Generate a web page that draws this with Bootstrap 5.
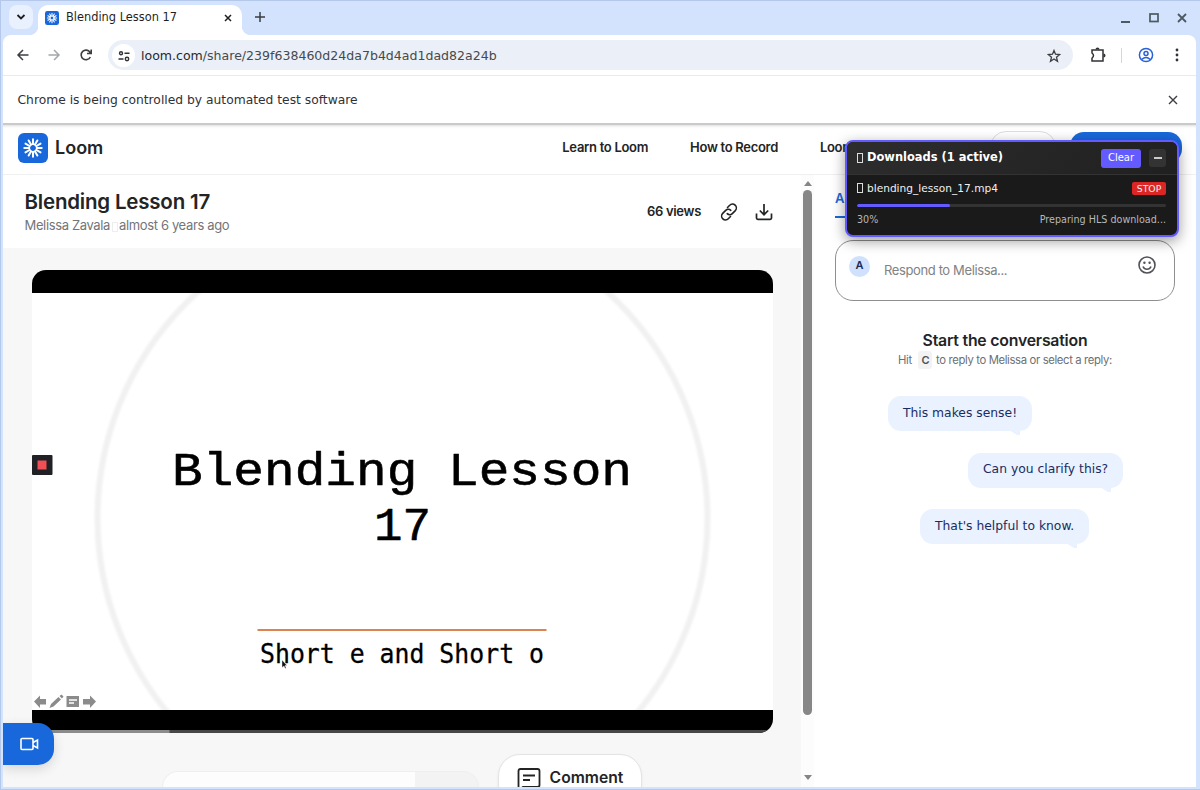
<!DOCTYPE html>
<html lang="en">
<head>
<meta charset="utf-8">
<title>Blending Lesson 17</title>
<link rel="stylesheet" href="https://cdn.jsdelivr.net/npm/bootstrap@5.3.0/dist/css/bootstrap.min.css">
<style>
html,body{height:100%;overflow:hidden}
body{font-family:Inter,sans-serif;color:#232425;font-size:14px;line-height:1.2}
svg{display:block;flex:none}
.ui{font-family:"DejaVu Sans",sans-serif}
.window{width:1200px;height:790px;background:#d3e3fd;padding:0 4px 3px 2px;border:solid #b3c8ea;border-width:1px 0 1px 1px}
.tabstrip{height:34px;padding-left:6px}
.tabsearch{width:24px;height:24px;border-radius:8px;background:#e9f0fe;margin-top:4px}
.tab{width:204px;height:30px;background:#fff;border-radius:10px 10px 0 0;margin:4px 0 0 5px;padding:0 6px 5px 7px;position:relative;font-size:11.4px;color:#1f1f1f}
.tab::before,.tab::after{content:"";position:absolute;bottom:0;width:9px;height:9px}
.tab::before{left:-9px;background:radial-gradient(circle at 0 0,transparent 9px,#fff 9.5px)}
.tab::after{right:-9px;background:radial-gradient(circle at 100% 0,transparent 9px,#fff 9.5px)}
.toolbar{height:41px;background:#fff;border-radius:8px 8px 0 0;padding-left:13px;padding-right:13px;border-bottom:1px solid #e9eaec}
.omni{width:965px;height:30px;border-radius:15px;background:#ebf0f8;font-size:12.55px;color:#46494d;margin-left:15px;padding:1px 12px 0 4px}
.omni b{font-weight:400;color:#26282b}
.siteinfo{width:23px;height:23px;border-radius:50%;background:#fff}
.infobar{height:47px;background:#fff;font-size:12.3px;color:#303134;padding:0 17px 0 14.500px}
.page{height:664px;background:#fff;overflow:hidden;position:relative;border-top:2px solid #c9cacc;box-shadow:inset 0 3px 3px -2px #ddd}
.sitehead{height:50px;border-bottom:1px solid #f0f0f0;padding:0 14px 4px 14.500px;font-weight:600}
.logo{font-size:18px;letter-spacing:0}
.navlinks{gap:42px;margin-left:459px;white-space:nowrap;font-size:13px;letter-spacing:-.3px;padding-top:1px}
.leftpane{width:798px}
.titlebar{height:73px;padding:0 26px 0 21.500px}
.titlebar h1{font-size:20.5px;font-weight:600;letter-spacing:-.2px;margin:12px 0 0;line-height:30px}
.byline{font-size:13px;letter-spacing:-.36px;color:#737578;line-height:17px}
.views{font-size:13px;letter-spacing:-.3px;font-weight:600}
.stage{background:#f7f7f7;height:542px;padding:22px 28px 0 28.500px}
.video{width:741px;height:463px;border-radius:14px;overflow:hidden;background:#000}
.composer{width:317px;height:40px;border-radius:16px 16px 0 0;background:linear-gradient(90deg,#fdfdfd 0 252px,#f3f3f3 252px);border:1px solid #efefef;border-bottom:0;margin:17px 0 0 130px}
.commentbtn{width:144px;height:60px;border:1px solid #e4e4e4;border-radius:22px;background:#fff;margin-left:19px;font-size:15.7px;font-weight:600;padding:0 0 11px 1px;box-shadow:0 1px 3px #0001}
.scroller{width:13px;background:#fcfcfc;padding:6px 0 5px}
.thumb{width:9px;height:525px;border-radius:5px;background:#878787;margin-top:4px}
.rightpane{width:382px;padding:0 21px 0 21px}
.tabs-row{height:43px;color:#1868db;font-weight:600;font-size:13px;padding-top:16px}
.tabs-row span{border-bottom:2px solid #1868db;width:60px}
.reply{height:61px;border:1px solid #8d8f91;border-radius:18px;margin-top:22px;padding:0 17px 0 13px;color:#808284;font-size:13px;letter-spacing:-.38px}
.avatar{width:21px;height:21px;border-radius:50%;background:#cfe1fd;color:#1c2b52;font-size:11px;font-weight:600;margin-bottom:9px;letter-spacing:0}
.convo{font-size:15.8px;font-weight:600;letter-spacing:-.2px;margin-top:30px;line-height:20px}
.hint{font-size:11.3px;letter-spacing:-.36px;color:#6c6f73;line-height:18px}
.hint kbd{font:600 11px Inter,sans-serif;color:#505258;background:#f3f3f4;border-radius:3px;padding:2px 3px;margin:0 1px}
.bubble{height:35px;border-radius:13px;background:#e9f2fe;color:#1c2b61;font-size:12.33px;padding:0 15px 1px;position:relative;width:max-content;margin-bottom:21.5px}
.bubble::after{content:"";position:absolute;right:12px;bottom:-4px;border:solid transparent;border-width:0 3px 6px 8px;border-right-color:#e9f2fe;border-top:5px solid #e9f2fe;border-bottom:0}
.ghostbtn{position:absolute;left:987px;top:6px;width:66px;height:32px;border:1px solid #ddd;border-radius:16px}
.bluebtn{position:absolute;left:1067px;top:7px;width:112px;height:31px;border-radius:14px;background:#1868db}
.dl{position:absolute;left:842px;top:15px;width:334px;height:97px;background:#1a1a1a;border:2px solid #635bff;border-radius:8px;color:#fff;box-shadow:0 4px 14px #0006;overflow:hidden}
.dlhead{height:33px;background:linear-gradient(135deg,#2d2d2d,#202020);border-bottom:1px solid #333;padding:0 11px 0 10px;font-size:11.45px;font-weight:700}
.clearbtn{width:40px;height:19px;border-radius:3px;background:#635bff;font-size:10px;font-weight:400}
.minbtn{width:17px;height:18px;border-radius:3px;background:#333}
.stopbtn{background:#dc2626;border-radius:2px;width:34px;height:13px;font-size:9.3px}
.tofu{display:inline-block;width:6px;height:10px;border:1px solid #ddd;margin-right:4px;vertical-align:-1px}
.dlrow{font-size:10.6px;color:#f0f0f0;padding:7px 11px 0 10px;height:21px}
.dlbar{height:3px;background:#333;margin:8px 11px 0 10px;border-radius:2px}
.dlbar .progress-bar{background:#635bff;border-radius:2px}
.dlfoot{font-size:9.6px;color:#b8b8b8;padding:7px 11px 0 10px}
.recbtn{position:absolute;left:0;top:598px;width:51px;height:42px;background:#1868db;border-radius:0 16px 16px 0;box-shadow:0 4px 12px #0002;padding-left:17px}
</style>
<script src="https://cdn.jsdelivr.net/npm/bootstrap@5.3.0/dist/js/bootstrap.bundle.min.js"></script>
</head>
<body>
<svg width="0" height="0" class="position-absolute"><defs>
<g id="burst" stroke="#fff" stroke-width="2" stroke-linecap="round"><g id="rays"><path d="M0-4V-8.7M0 4V8.7M-4 0H-8.7M4 0H8.7"/></g><use href="#rays" transform="rotate(30)"/><use href="#rays" transform="rotate(60)"/><circle r="3.7" fill="none" stroke-width="1.6"/></g>
</defs></svg>
<div class="window d-flex flex-column">
  <div class="tabstrip d-flex ui flex-shrink-0">
    <div class="tabsearch d-flex align-items-center justify-content-center"><svg width="10" height="8" fill="none" stroke="#1f1f1f" stroke-width="1.8"><path d="M1.500 2 5 5.500 8.500 2"/></svg></div>
    <div class="tab d-flex align-items-center">
      <svg width="14" height="14" viewBox="-15 -15 30 30"><rect x="-15" y="-15" width="30" height="30" rx="5" fill="#1868db"/><use href="#burst" transform="scale(1.15)"/></svg>
      <span class="flex-grow-1" style="margin-left:7px">Blending Lesson 17</span>
      <svg width="8" height="8" stroke="#1f1f1f" stroke-width="1.500" class="me-1"><path d="M1 1 7 7M7 1 1 7"/></svg>
    </div>
    <svg width="12" height="12" stroke="#3b3e42" stroke-width="1.500" style="margin:10px 0 0 12px"><path d="M6 1V11M1 6H11"/></svg>
    <div class="ms-auto d-flex align-items-center" style="gap:18px;padding-right:9px">
      <svg width="10" height="10"><path d="M0 9H9" stroke="#4b5a60" stroke-width="2"/></svg>
      <svg width="10" height="10"><rect x="1" y="1" width="8" height="7.500" fill="none" stroke="#4b5a60" stroke-width="1.700"/></svg>
      <svg width="10" height="10" stroke="#4b5a60" stroke-width="1.800"><path d="M1 1 9 9M9 1 1 9"/></svg>
    </div>
  </div>
  <div class="toolbar d-flex align-items-center ui flex-shrink-0">
    <svg width="14" height="14" fill="none" stroke="#3c3e42" stroke-width="1.500"><path d="M12.500 7H2.500M7 2 2 7 7 12"/></svg>
    <svg width="14" height="14" fill="none" stroke="#a5a7aa" stroke-width="1.500" style="margin-left:17px"><path d="M1.500 7H11.500M7 2 12 7 7 12"/></svg>
    <svg width="14" height="14" fill="none" stroke="#3c3e42" stroke-width="1.600" style="margin-left:18px"><path d="M11.300 9A4.800 4.800 0 1 1 11 4.300L12 5.300M12.200 1.500V5.500H8"/></svg>
    <div class="omni d-flex align-items-center">
      <div class="siteinfo d-flex align-items-center justify-content-center" style="margin-right:6px"><svg width="12" height="12" fill="none" stroke="#303236" stroke-width="1.400"><circle cx="3" cy="3.200" r="1.500"/><path d="M6.500 3.200H11.500M.5 9H5.500"/><circle cx="9" cy="9" r="1.700"/></svg></div>
      <span class="flex-grow-1"><b>loom.com</b>/share/239f638460d24da7b4d4ad1dad82a24b</span>
      <svg width="14" height="14" viewBox="0 0 14 14" fill="none" stroke="#3c3e42" stroke-width="1.300"><path d="M7 1.500 8.500 5.200 12.700 5.500 9.500 8.200 10.500 12.300 7 10 3.500 12.300 4.500 8.200 1.300 5.500 5.500 5.200Z"/></svg>
    </div>
    <svg width="16" height="16" fill="none" stroke="#303236" stroke-width="1.500" style="margin-left:17px"><path d="M2 3H13V14H2V11.200Q5 8.500 2 6Z"/><path fill="#303236" stroke="none" d="M5.500 2.500a2 2 0 0 1 4 0ZM13.500 6.500a2 2 0 0 1 0 4Z"/></svg>
    <div style="width:1px;height:15px;background:#c5d8f7;margin:0 16px 0 15px"></div>
    <svg width="16" height="16" fill="none" stroke="#2862d9" stroke-width="1.500"><circle cx="8" cy="8" r="6.600"/><circle cx="8" cy="6.400" r="2"/><path d="M3.700 12.500Q8 8.500 12.300 12.500"/></svg>
    <svg width="4" height="14" fill="#303236" class="ms-auto me-1"><circle cx="2" cy="2" r="1.400"/><circle cx="2" cy="7" r="1.400"/><circle cx="2" cy="12" r="1.400"/></svg>
  </div>
  <div class="infobar d-flex align-items-center justify-content-between ui flex-shrink-0"><span style="padding-top:1px">Chrome is being controlled by automated test software</span>
    <svg width="12" height="12" stroke="#3c3e42" stroke-width="1.400"><path d="M2 2 10 10M10 2 2 10"/></svg></div>

  <div class="page flex-shrink-0">
    <div class="sitehead d-flex align-items-center">
      <svg width="30" height="30" viewBox="-15 -15 30 30"><rect x="-15" y="-15" width="30" height="30" rx="6" fill="#1868db"/><use href="#burst"/></svg>
      <span class="logo" style="margin-left:7.500px">Loom</span>
      <nav class="navlinks d-flex"><span>Learn to Loom</span><span>How to Record</span><span>Loom</span></nav>
    </div>
    <div class="d-flex">
      <div class="leftpane">
        <div class="titlebar d-flex align-items-center">
          <div class="align-self-start flex-grow-1"><h1>Blending Lesson 17</h1><div class="byline">Melissa Zavala<span class="tofu" style="border-color:#eee;margin:0 1px 0 2px;vertical-align:-2px"></span>almost 6 years ago</div></div>
          <span class="views">66 views</span>
          <svg width="18" height="18" viewBox="0 0 18 18" fill="none" stroke="#232425" stroke-width="1.600" stroke-linecap="round" style="margin-left:19px"><path d="M7.500 4.500 9.700 2.300A3.600 3.600 0 0 1 15.300 7.600L12.300 10.600A3.600 3.600 0 0 1 7.200 10.700M10.500 13.500 8.300 15.700A3.600 3.600 0 0 1 2.700 10.400L5.700 7.400A3.600 3.600 0 0 1 10.800 7.300"/></svg>
          <svg width="18" height="18" viewBox="0 0 18 18" fill="none" stroke="#232425" stroke-width="1.700" style="margin:0 2px 0 17px"><path d="M9 1V11.500M4.800 7.500 9 11.700 13.200 7.500M1.500 10.500V15Q1.500 16.300 2.800 16.300H15.200Q16.500 16.300 16.500 15V10.500"/></svg>
        </div>
        <div class="stage">
          <div class="video">
            <svg width="741" height="463" viewBox="32 270 741 463">
              <defs><clipPath id="slide"><rect x="32" y="293" width="741" height="417"/></clipPath><filter id="soft"><feGaussianBlur stdDeviation="1.200"/></filter></defs>
              <rect x="32" y="293" width="741" height="417" fill="#fff"/>
              <g clip-path="url(#slide)"><circle cx="402.500" cy="518" r="305" fill="none" stroke="#f1f1f1" stroke-width="6" filter="url(#soft)"/></g>
              <g fill="#000" font-family="Liberation Mono, monospace" font-size="47" stroke="#000" stroke-width=".6" stroke-linejoin="round">
                <text x="172" y="484.500" textLength="460" lengthAdjust="spacingAndGlyphs">Blending Lesson</text>
                <text x="374" y="539.500" textLength="57" lengthAdjust="spacingAndGlyphs">17</text></g>
              <path d="M257.500 630H546.500" stroke="#dc8352" stroke-width="2"/>
              <text x="260" y="662.500" fill="#000" stroke="#000" stroke-width=".3" font-family="DejaVu Sans Mono, monospace" font-size="26.500" textLength="284" lengthAdjust="spacingAndGlyphs">Short e and Short o</text>
              <path d="M282 660V667.500L284 666 285.200 668.500 286.200 668 285 665.500H287Z" fill="#111" stroke="#fff" stroke-width=".4"/>
              <rect x="32" y="455" width="20.500" height="20" rx="1" fill="#202124"/><rect x="37.500" y="460.500" width="9" height="9" fill="#f04f55"/>
              <g fill="#8b8b8b"><path d="M34 701.500 40 695.500V699H46V704.500H40V708ZM96 701.500 90 695.500V699H83V704.500H90V708Z"/><path d="M49.500 708 51 704 58.500 697 61 699.500 53.500 706.500ZM59.500 696 61.500 694.500 63.500 696.500 62 698.500Z"/><path d="M66.500 696H79V707H66.500Z"/><path d="M69 700H77M69 703H74" stroke="#fff" stroke-width="1.300"/></g>
              <path d="M32 731.500H773" stroke="#484848" stroke-width="3"/><path d="M32 731.500H169.500" stroke="#8b8b8b" stroke-width="3"/>
            </svg>
          </div>
          <div class="d-flex mt-1" style="padding-top:17px"><div class="composer"></div>
            <div class="commentbtn d-flex align-items-center justify-content-center"><svg width="24" height="24" fill="none" stroke="#232425" stroke-width="1.800" style="margin-right:9px"><path d="M1.500 21V4Q1.500 2 3.500 2H20.500Q22.500 2 22.500 4V18Q22.500 20 20.500 20H6L1.500 23ZM6 8.500H18M6 13H13"/></svg>Comment</div></div>
        </div>
      </div>
      <div class="scroller d-flex flex-column align-items-center">
        <svg width="8" height="5"><path d="M0 5 4 0 8 5Z" fill="#858585"/></svg>
        <div class="thumb"></div>
        <svg width="8" height="5" style="margin-top:60px"><path d="M0 0 4 5 8 0Z" fill="#858585"/></svg>
      </div>
      <div class="rightpane">
        <div class="tabs-row d-flex"><span>A</span></div>
        <div class="reply d-flex align-items-center"><div class="avatar d-flex align-items-center justify-content-center">A</div><span class="flex-grow-1" style="padding-left:14px">Respond to Melissa...</span>
          <svg width="20" height="20" fill="none" stroke="#505258" stroke-width="1.600" style="margin-bottom:12px"><circle cx="10" cy="10" r="8"/><path d="M6 11.500Q7.200 14.300 10 14.300T14 11.500"/><g fill="#505258" stroke="none"><circle cx="7.400" cy="7.800" r="1.200"/><circle cx="12.600" cy="7.800" r="1.200"/></g></svg></div>
        <div class="convo text-center">Start the conversation</div>
        <div class="hint text-center">Hit&nbsp; <kbd>C</kbd> to reply to Melissa or select a reply:</div>
        <div class="ui" style="padding-top:27px">
          <div class="bubble d-flex align-items-center" style="margin-left:53px">This makes sense!</div>
          <div class="bubble d-flex align-items-center" style="margin-left:133px">Can you clarify this?</div>
          <div class="bubble d-flex align-items-center" style="margin-left:85px">That's helpful to know.</div>
        </div>
      </div>
    </div>
    <div class="ghostbtn"></div><div class="bluebtn"></div>
    <div class="dl ui">
      <div class="dlhead d-flex align-items-center"><span class="tofu"></span><span class="flex-grow-1">Downloads (1 active)</span><span class="clearbtn d-flex align-items-center justify-content-center me-2">Clear</span><span class="minbtn d-flex align-items-center justify-content-center"><svg width="8" height="2"><path d="M0 1H8" stroke="#fff" stroke-width="1.400"/></svg></span></div>
      <div class="dlrow d-flex align-items-start justify-content-between"><span><span class="tofu"></span>blending_lesson_17.mp4</span><span class="stopbtn d-flex align-items-center justify-content-center">STOP</span></div>
      <div class="progress dlbar"><div class="progress-bar" style="width:30%"></div></div>
      <div class="dlfoot d-flex justify-content-between"><span>30%</span><span>Preparing HLS download...</span></div>
    </div>
    <div class="recbtn d-flex align-items-center"><svg width="19" height="14" fill="none" stroke="#fff" stroke-width="1.600"><rect x="1" y="1.500" width="12" height="11" rx="1"/><path d="M13 5.500 17.500 3V11L13 8.500"/></svg></div>
  </div>
</div>
</body>
</html>
